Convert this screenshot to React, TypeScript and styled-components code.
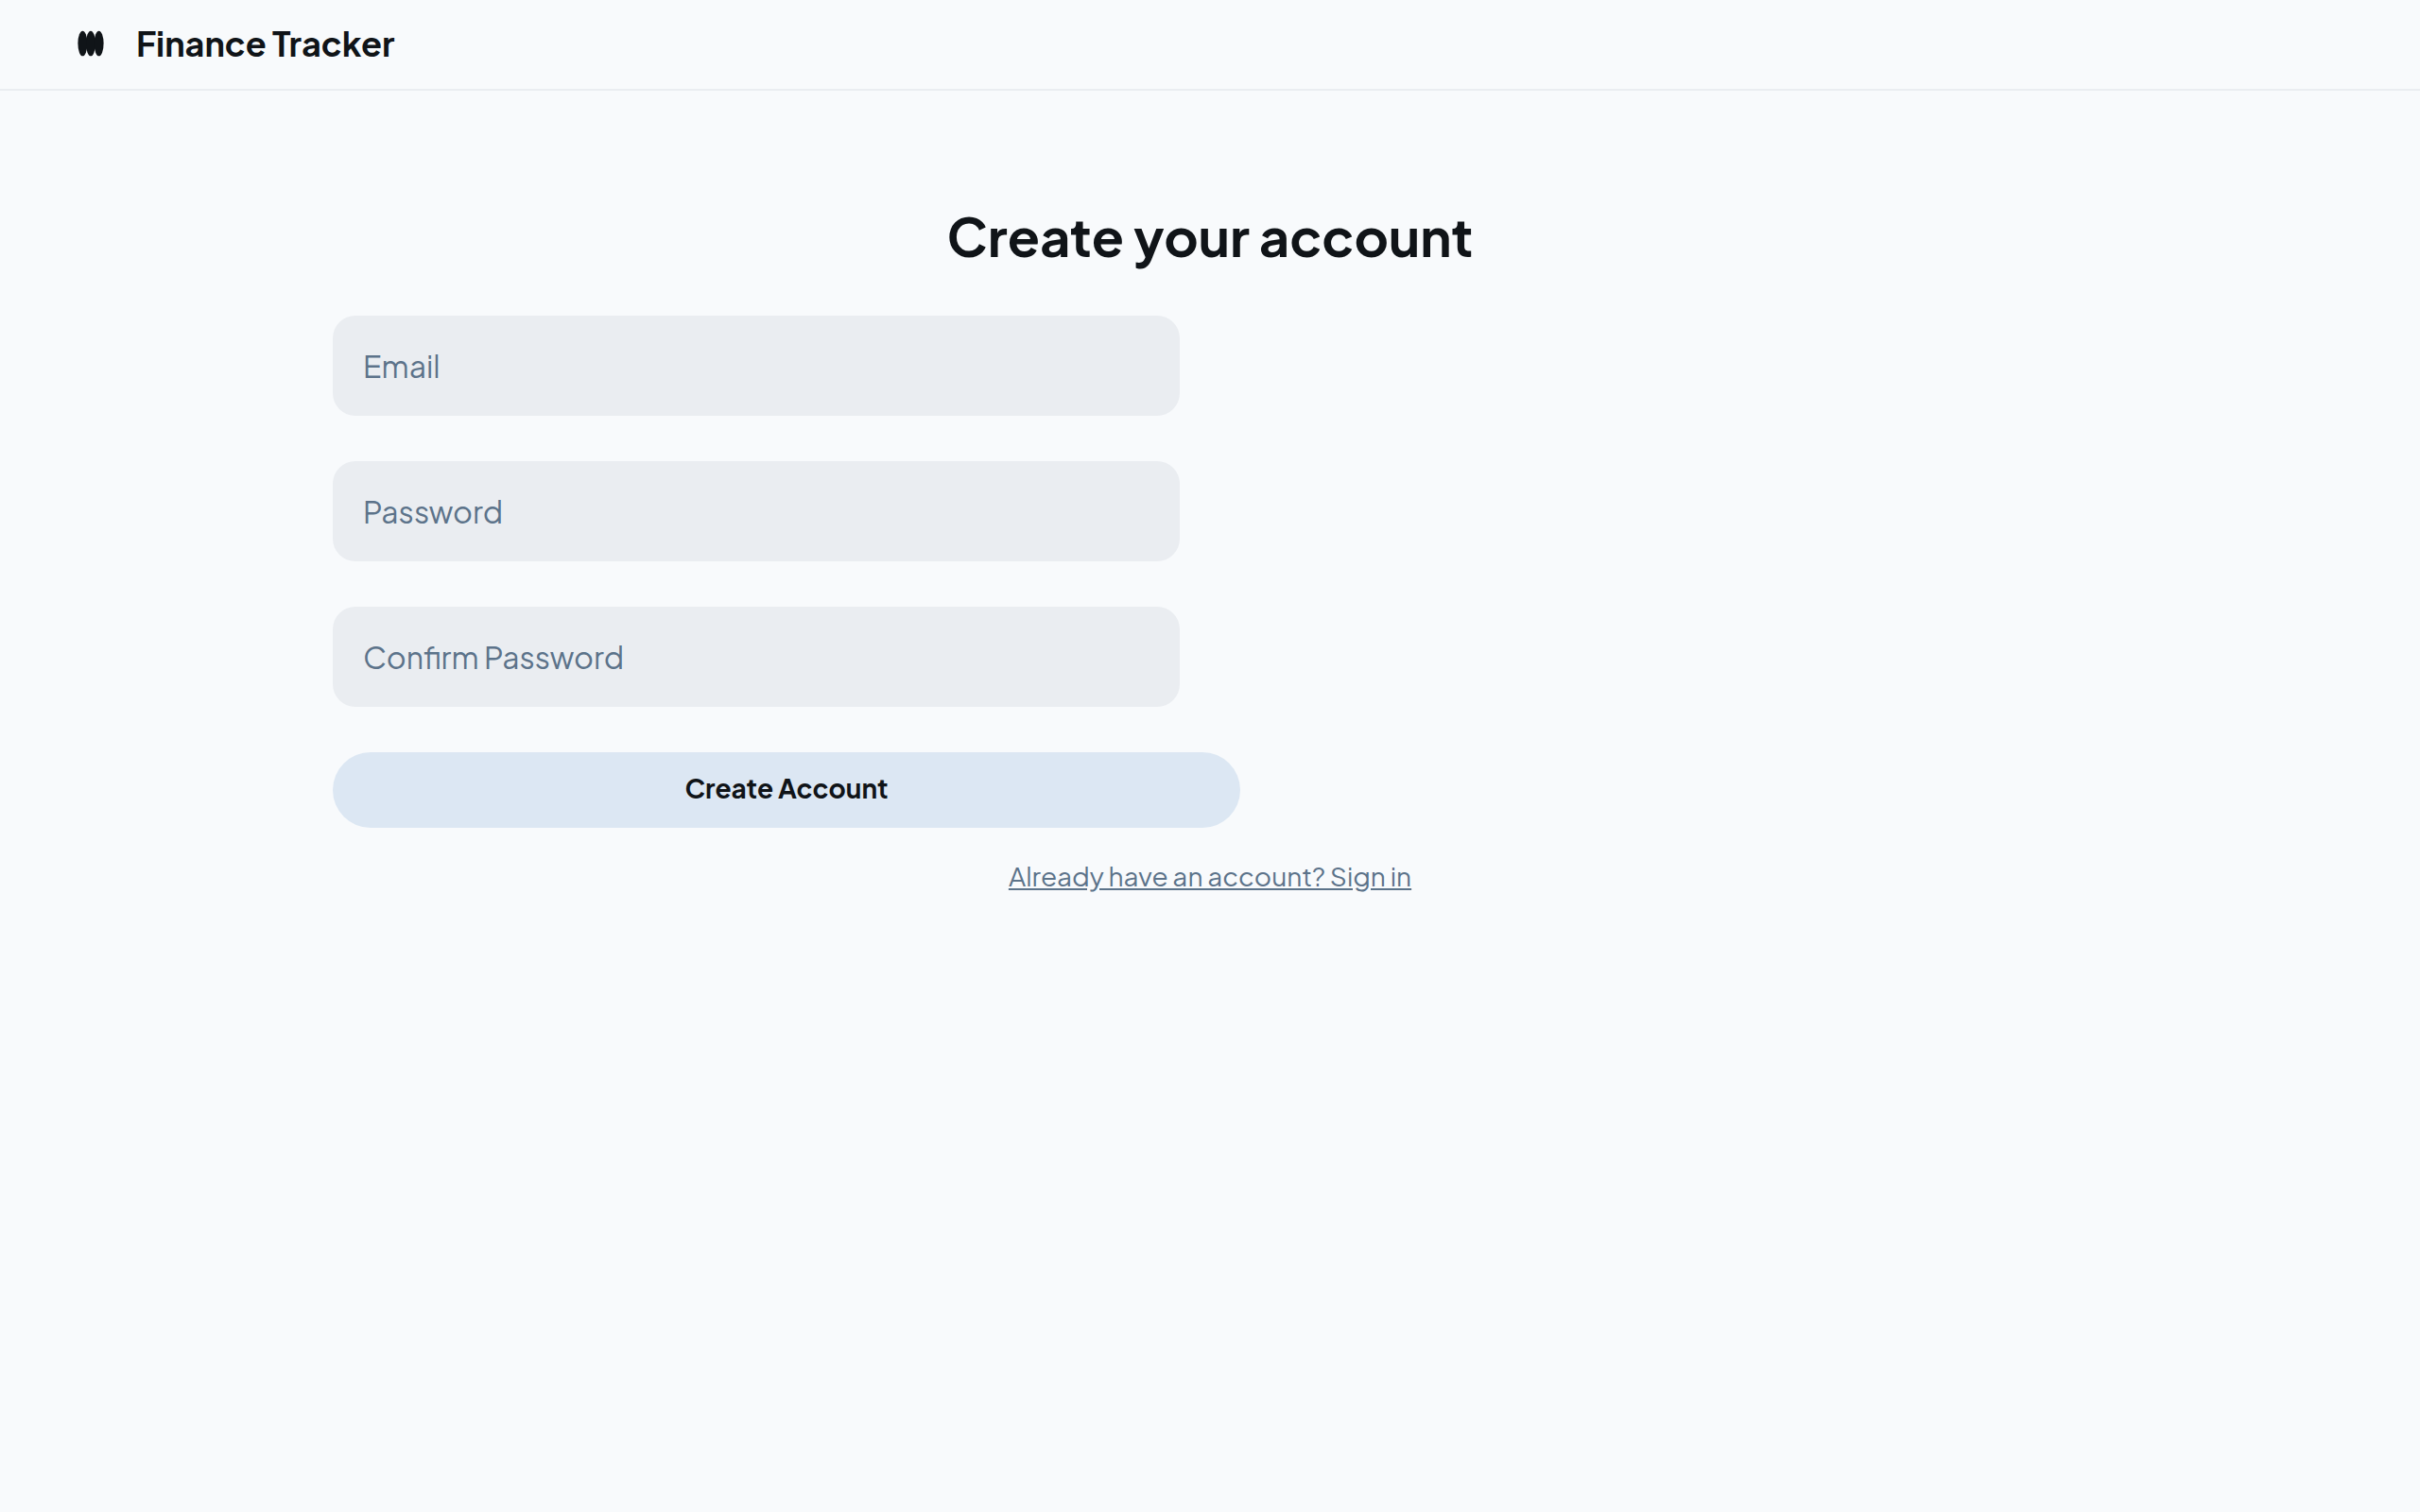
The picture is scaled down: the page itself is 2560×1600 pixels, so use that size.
import React from "react";
import styled, { createGlobalStyle } from "styled-components";

const GlobalStyle = createGlobalStyle`
  *, *::before, *::after { box-sizing: border-box; }
  body {
    margin: 0;
    background: #f8fafc;
    color: #101418;
    font-family: "Plus Jakarta Sans", Inter, "Noto Sans", sans-serif;
  }
`;

const Page = styled.div`
  display: flex;
  flex-direction: column;
  min-height: 100vh;
`;

const Header = styled.header`
  display: flex;
  align-items: center;
  gap: 32px;
  padding: 24px 80px;
  border-bottom: 2px solid #eaedf1;
`;

const Logo = styled.svg`
  width: 32px;
  height: 32px;
  margin-bottom: 2px;
  fill: currentColor;
`;

const Brand = styled.h2`
  margin: 0;
  padding-bottom: 2px;
  font-size: 36px;
  line-height: 44px;
  font-weight: 700;
`;

const Main = styled.main`
  display: flex;
  flex-direction: column;
  width: 100%;
  max-width: 1920px;
  margin: 0 auto;
  padding: 118px 32px 0;
`;

const Title = styled.h1`
  margin: 0;
  padding-bottom: 50px;
  font-size: 56px;
  line-height: 70px;
  font-weight: 700;
  text-align: center;
`;

const Form = styled.form`
  display: flex;
  flex-direction: column;
  gap: 48px;
  width: 100%;
  max-width: 960px;
`;

const Field = styled.label`
  display: flex;
  padding-right: 64px;
`;

const TextInput = styled.input`
  width: 100%;
  height: 106px;
  padding: 0 32px;
  border: 0;
  border-radius: 24px;
  background: #eaedf1;
  color: #101418;
  font-family: inherit;
  font-size: 32px;

  &::placeholder {
    color: #5c738a;
    opacity: 1;
  }

  &:focus {
    outline: none;
  }
`;

const SubmitButton = styled.button`
  height: 80px;
  padding: 0 40px 6px;
  border: 0;
  border-radius: 40px;
  background: #dce7f3;
  color: #101418;
  font-family: inherit;
  font-size: 28px;
  font-weight: 700;
  cursor: pointer;
`;

const SignIn = styled.a`
  align-self: center;
  margin-top: 30px;
  color: #5c738a;
  font-size: 28px;
  line-height: 42px;
  text-decoration: underline;
`;

const fields = [
  { name: "email", type: "email", label: "Email" },
  { name: "password", type: "password", label: "Password" },
  { name: "confirm", type: "password", label: "Confirm Password" },
];

export default function App() {
  return (
    <Page>
      <GlobalStyle />
      <Header>
        <Logo viewBox="0 0 32 32" aria-hidden="true">
          <ellipse cx="7.4" cy="16" rx="5" ry="13.3" />
          <ellipse cx="16" cy="16" rx="5" ry="13.3" />
          <ellipse cx="24.6" cy="16" rx="5" ry="13.3" />
        </Logo>
        <Brand>Finance Tracker</Brand>
      </Header>
      <Main>
        <Title>Create your account</Title>
        <Form onSubmit={(event) => event.preventDefault()}>
          {fields.map((field) => (
            <Field key={field.name}>
              <TextInput
                name={field.name}
                type={field.type}
                placeholder={field.label}
                aria-label={field.label}
              />
            </Field>
          ))}
          <SubmitButton type="submit">Create Account</SubmitButton>
        </Form>
        <SignIn href="#">Already have an account? Sign in</SignIn>
      </Main>
    </Page>
  );
}
